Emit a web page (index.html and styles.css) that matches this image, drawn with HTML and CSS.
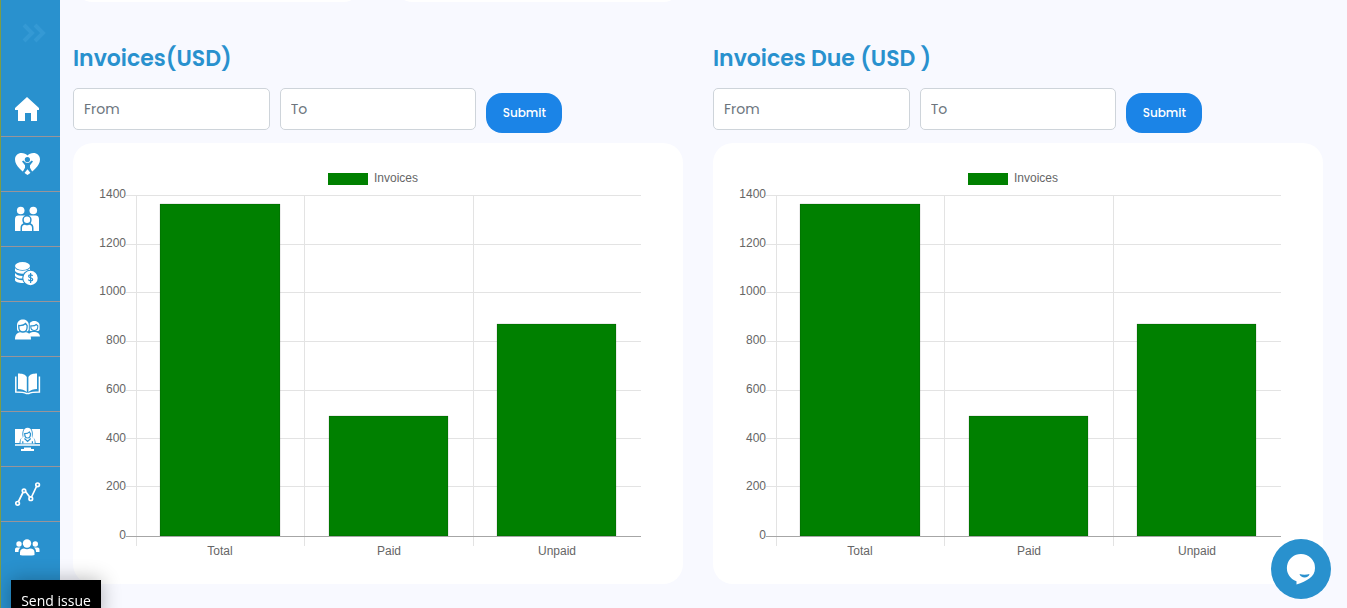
FILE: index.html
```html
<!DOCTYPE html>
<html lang="en">
<head>
<meta charset="utf-8">
<title>Dashboard</title>
<meta name="viewport" content="width=device-width, initial-scale=1">
<link rel="stylesheet" href="styles.css">
</head>
<body>
<nav class="sidebar" aria-label="Main">
  <button class="toggle" type="button" aria-label="Expand menu">
    <svg width="24" height="20" viewBox="0 0 24 20"><path d="M2 2l8 8-8 8M13 2l8 8-8 8" fill="none" stroke="#3499d4" stroke-width="4"/></svg>
  </button>
  <a class="item" href="#" aria-label="Home">
    <svg class="icon" viewBox="0 0 26 26"><path d="M12 1L24 12v2h-2v11h-6v-8h-6v8H3V14H0v-2z"/></svg>
  </a>
  <a class="item" href="#" aria-label="Care">
    <svg class="icon" viewBox="0 0 26 26"><path d="M12.500 24C8 21 0 15 0 8.500C0 4.500 3 2 6.500 2C9 2 11.300 3 12.500 4.500C13.700 3 16 2 18.500 2C22 2 25 4.500 25 8.500C25 15 17 21 12.500 24z"/><g class="cut"><circle cx="12.400" cy="8.500" r="2.600"/><path d="M7 10.500L8.200 9.500 11 11.800h3l2.800-2.300 1.200 1-3 3.700v2.500l2.500 4.500-1.700 1-3.300-4-3.300 4-1.700-1 2.500-4.500v-2.500z"/></g></svg>
  </a>
  <a class="item" href="#" aria-label="Families">
    <svg class="icon" viewBox="0 0 26 26"><circle cx="5.700" cy="4.500" r="3.800"/><circle cx="18.300" cy="4.500" r="3.800"/><path d="M0 25V13c0-2.500 1.500-3.500 3.500-3.500H8c2 0 3 .5 4 2 1-1.500 2-2 4-2h4.500c2 0 3.500 1 3.500 3.500v12z"/><path class="cut" d="M5.500 25v-3c0-2.500 1-4 2.800-4.500C6 13 8 9.300 12 9.300s6 3.700 3.700 8.200c1.800.5 2.800 2 2.800 4.500v3z"/><circle cx="12" cy="13.800" r="3.200"/><path d="M7 25v-3c0-2.200 1.300-3.300 3-3.300 1 .7 3 .7 4 0 1.700 0 3 1.100 3 3.300v3z"/></svg>
  </a>
  <a class="item" href="#" aria-label="Payments">
    <svg class="icon" viewBox="0 0 26 26"><ellipse cx="7.500" cy="5" rx="7.500" ry="4"/><path d="M0 7c2 3.500 13 3.500 15 0v3c-2 3-12 4-15 0zM0 12c2 3 7 3.500 11 2.500l-1.500 2.800C6 18 2 17.500 0 15zM0 16.500c2 2 5 3 9 2.500v3c-4 .5-9-1-9-3z"/><circle class="cut" cx="15.500" cy="17" r="8.300"/><circle cx="15.500" cy="17" r="7.200"/><path d="M17.600 14.900c-.9-1.500-4.100-1.300-4 .4.100 1.900 4.100 1 4.100 3.100 0 1.900-3.300 1.900-4.400.3M15.600 12v10" fill="none" stroke="#2991ce" stroke-width="1.200"/></svg>
  </a>
  <a class="item" href="#" aria-label="Parents">
    <svg class="icon" viewBox="0 0 26 26"><path d="M14 13V9.500c0-6 10.600-6 10.600 0V13c0 1.500-1 2-2 2h-6.600c-1 0-2-.5-2-2z"/><path d="M13 20.500c.5-3.500 3-4.500 6-4.500s5.500 1 6 4.500z"/><path d="M15.800 9.800c2.500.2 4.500-.3 5.500-1.300l1.500 1.300v1c0 2.200-1.500 3.700-3.500 3.700s-3.500-1.500-3.500-3.700z" stroke="#2991ce" stroke-width="1.100"/><path class="cut" d="M1 13V9C1 1 14.800 1 14.800 9v4c0 2-1 3-2.500 3.500h-9C2 16 1 15 1 13z"/><path d="M2 13V9c0-7.500 11.800-7.500 11.800 0v4c0 1.500-1 2.300-2 2.300H4c-1 0-2-.8-2-2.300z"/><path d="M0 23.500c0-5 2-6.800 5-7.300h6c3 .5 5 2.300 5 7.300z"/><path d="M3.800 9.500c3 .2 5.500-.5 6.800-2l1.500 2V11c0 3-1.800 5-4.200 5s-4.100-2-4.100-5z" stroke="#2991ce" stroke-width="1.300"/></svg>
  </a>
  <a class="item" href="#" aria-label="Lessons">
    <svg class="icon" viewBox="0 0 26 26"><path d="M11.800 21C9.500 19 6.500 18.300 3 18V2.500C7 2.500 10 3 11.800 6zM13.400 21c2.300-2 5.100-2.700 8.600-3V2.500c-4 0-6.800.5-8.600 3.500z"/><path d="M.8 5.500v15.600c5 0 8 0 10.700 1.500h2.200c2.700-1.500 5.700-1.500 10.700-1.500V5.500" fill="none" stroke="#fff" stroke-width="1.500"/></svg>
  </a>
  <a class="item" href="#" aria-label="Online classes">
    <svg class="icon" viewBox="0 0 26 26"><path d="M0 3h25v14H0zM0 18.300h25v1.500H0zM9 21.500h7V23h3v2H6v-2h3z"/><path class="cut" d="M4.500 18c0-4.500 1.500-6 3.500-6.500C6.500 7.500 7.500 1 12.600 1s6.100 6.500 4.600 10.500c2 .5 3.500 2 3.500 6.500z"/><path d="M8.300 11V7c0-7 8.600-7 8.600 0v4l1.600 1c1 .8 1.200 2.500 1.200 5.500H5.500c0-3 .2-4.700 1.200-5.500z"/><path d="M9.700 7.700c2 0 3.700-.5 4.600-1.700l1.200 1.700c0 2.700-1 4.300-2.900 4.300s-2.900-1.600-2.900-4.300z" stroke="#2991ce" stroke-width="1.200"/><path d="M7.800 17.500v-2.300M17.400 17.500v-2.300M9.500 12.500l3.100 3 3.100-3" fill="none" stroke="#2991ce" stroke-width="1.200"/></svg>
  </a>
  <a class="item" href="#" aria-label="Reports">
    <svg class="icon" viewBox="0 0 26 26"><g fill="none" stroke="#fff" stroke-width="1.700"><path d="M3.500 20.500L8.200 11M10.500 10.500l4.200 5.500M16.500 16l5-10.500"/><circle cx="2.600" cy="22.300" r="1.800"/><circle cx="9" cy="9.800" r="1.700"/><circle cx="15.800" cy="17.700" r="1.800"/><circle cx="22.600" cy="3.800" r="1.800"/></g></svg>
  </a>
  <a class="item" href="#" aria-label="Users">
    <svg class="icon" viewBox="0 1 26 26"><circle cx="4" cy="8" r="2.700"/><circle cx="20.300" cy="8" r="2.700"/><circle cx="12" cy="7.500" r="4.200"/><path d="M5 19v-2.500c0-3 2-4 4-4 2 1 4 1 6 0 3 0 4.500 1.500 4.500 4V19c-1 .8-13.500.8-14.500 0zM0 16v-2.500C0 12 1 11.500 2.500 11.500h3c-1.500 1.200-2 2.500-2 4.500zM24.500 16v-2.500c0-1.500-1-2-2.500-2h-3c1.500 1.200 2 2.500 2 4.500z"/></svg>
  </a>
</nav>

<main class="content">
  <div class="stats">
    <div class="stat"></div>
    <div class="stat"></div>
  </div>
  <div class="panels">
    <section class="panel">
      <h2 class="title">Invoices(USD)</h2>
      <form class="range">
        <input class="field" type="text" placeholder="From" aria-label="Invoices from">
        <input class="field" type="text" placeholder="To" aria-label="Invoices to">
        <button class="submit" type="button">Submit</button>
      </form>
      <div class="card">
        <svg class="chart" viewBox="0 0 610 441" role="img" aria-label="Invoices by status">
          <rect x="255" y="30" width="40" height="12" fill="#008000"/>
          <text x="301" y="39">Invoices</text>
          <path class="grid" d="M53 52.500H568M53 101.500H568M53 149.500H568M53 198.500H568M53 247.500H568M53 295.500H568M53 343.500H568M63.500 52V403M231.500 52V403M400.500 52V403"/>
          <path class="bars" d="M87 61h120v332H87zM256 273h119v120H256zM424 181h119v212H424z"/>
          <path class="axis" d="M53 393.500H568"/>
          <g class="end">
            <text x="53" y="55">1400</text><text x="53" y="104">1200</text><text x="53" y="152">1000</text><text x="53" y="201">800</text><text x="53" y="250">600</text><text x="53" y="299">400</text><text x="53" y="347">200</text><text x="53" y="396">0</text>
          </g>
          <g class="mid">
            <text x="147" y="412">Total</text><text x="316" y="412">Paid</text><text x="484" y="412">Unpaid</text>
          </g>
        </svg>
      </div>
    </section>
    <section class="panel">
      <h2 class="title">Invoices Due (USD )</h2>
      <form class="range">
        <input class="field" type="text" placeholder="From" aria-label="Invoices due from">
        <input class="field" type="text" placeholder="To" aria-label="Invoices due to">
        <button class="submit" type="button">Submit</button>
      </form>
      <div class="card">
        <svg class="chart" viewBox="0 0 610 441" role="img" aria-label="Invoices due by status">
          <rect x="255" y="30" width="40" height="12" fill="#008000"/>
          <text x="301" y="39">Invoices</text>
          <path class="grid" d="M53 52.500H568M53 101.500H568M53 149.500H568M53 198.500H568M53 247.500H568M53 295.500H568M53 343.500H568M63.500 52V403M231.500 52V403M400.500 52V403"/>
          <path class="bars" d="M87 61h120v332H87zM256 273h119v120H256zM424 181h119v212H424z"/>
          <path class="axis" d="M53 393.500H568"/>
          <g class="end">
            <text x="53" y="55">1400</text><text x="53" y="104">1200</text><text x="53" y="152">1000</text><text x="53" y="201">800</text><text x="53" y="250">600</text><text x="53" y="299">400</text><text x="53" y="347">200</text><text x="53" y="396">0</text>
          </g>
          <g class="mid">
            <text x="147" y="412">Total</text><text x="316" y="412">Paid</text><text x="484" y="412">Unpaid</text>
          </g>
        </svg>
      </div>
    </section>
  </div>
</main>

<button class="issue" type="button">Send issue</button>
<button class="chat" type="button" aria-label="Open chat">
  <svg width="60" height="60" viewBox="0 0 60 60"><path fill="#fff" d="M30 15a14 14 0 0 1 14 14c0 9-8 13-18.500 16.500V42.300A14 14 0 0 1 30 15z"/><path fill="#2991ce" d="M28.500 35c3 1 7 1 10 0-.5 4.500-9 4.500-10 0z"/></svg>
</button>
</body>
</html>
```
FILE: styles.css
```css
* { box-sizing: border-box; }

body {
  margin: 0;
  height: 100vh;
  display: flex;
  overflow: hidden;
  background: #f8f9ff;
  font-family: Poppins, Inter, sans-serif;
}

.sidebar {
  flex: 0 0 60px;
  display: flex;
  flex-direction: column;
  background: #2991ce;
  border-left: 1px solid #7a9c4a;
  overflow: hidden;
}

.toggle {
  flex: 0 0 82px;
  padding: 23px 0 0 21px;
  border: 0;
  background: none;
  text-align: left;
}
.toggle svg { display: block; height: 20px; margin-bottom: 39px; }

.item {
  flex: 0 0 55px;
  display: flex;
  align-items: center;
  padding-left: 14px;
  border-bottom: 1px solid #999499;
}
.item:last-child { border-bottom: 0; }

.icon { width: 26px; height: 26px; fill: #fff; }
.cut { fill: #2991ce; }

.content {
  flex: 1;
  min-width: 0;
  padding: 0 24px 24px 13px;
  overflow: hidden;
}

.stats {
  display: grid;
  grid-template-columns: repeat(4, 1fr);
  gap: 30px;
  margin-top: -38px;
}
.stat { height: 40px; border-radius: 20px; background: #fff; }

.panels {
  display: grid;
  grid-template-columns: repeat(2, minmax(0, 1fr));
  gap: 30px;
  margin-top: 38px;
}

.title {
  margin: 0 0 10px;
  color: #2991ce;
  font-size: 22px;
  font-weight: 600;
  line-height: 38px;
}

.range {
  display: grid;
  grid-template-columns: repeat(3, minmax(0, 1fr));
  gap: 10px;
  margin: 0 0 10px;
}
.field {
  width: 100%;
  height: 42px;
  padding: 0 10px;
  border: 1px solid #ced4da;
  border-radius: 5px;
  background: #fff;
  color: #495057;
  font: 14px Poppins, Inter, sans-serif;
}
.field::placeholder { color: #6c757d; opacity: 1; }
.submit {
  justify-self: start;
  width: 76px;
  height: 40px;
  margin-top: 5px;
  padding: 0;
  border: 0;
  border-radius: 16px;
  background: #1b84e7;
  color: #fff;
  font: 500 12px Poppins, Inter, sans-serif;
}

.card { border-radius: 20px; background: #fff; }

.chart {
  display: block;
  width: 100%;
  height: auto;
  font: 12px "Liberation Sans", Arial, sans-serif;
  fill: #666;
}
.grid { fill: none; stroke: #e3e3e3; }
.axis { fill: none; stroke: #a6a6a6; }
.bars { fill: #008000; stroke: rgba(0, 0, 0, .15); }
.end { text-anchor: end; }
.mid { text-anchor: middle; }

.issue {
  position: fixed;
  left: 11px;
  bottom: -12px;
  width: 90px;
  height: 40px;
  padding: 0;
  border: 0;
  background: #000;
  box-shadow: 0 0 20px rgba(0, 0, 0, .3);
  color: #fff;
  font: 14px "Open Sans", sans-serif;
}

.chat {
  position: fixed;
  right: 16px;
  bottom: 9px;
  width: 60px;
  height: 60px;
  padding: 0;
  border: 0;
  border-radius: 50%;
  background: #2991ce;
}
.chat svg { display: block; }
```
